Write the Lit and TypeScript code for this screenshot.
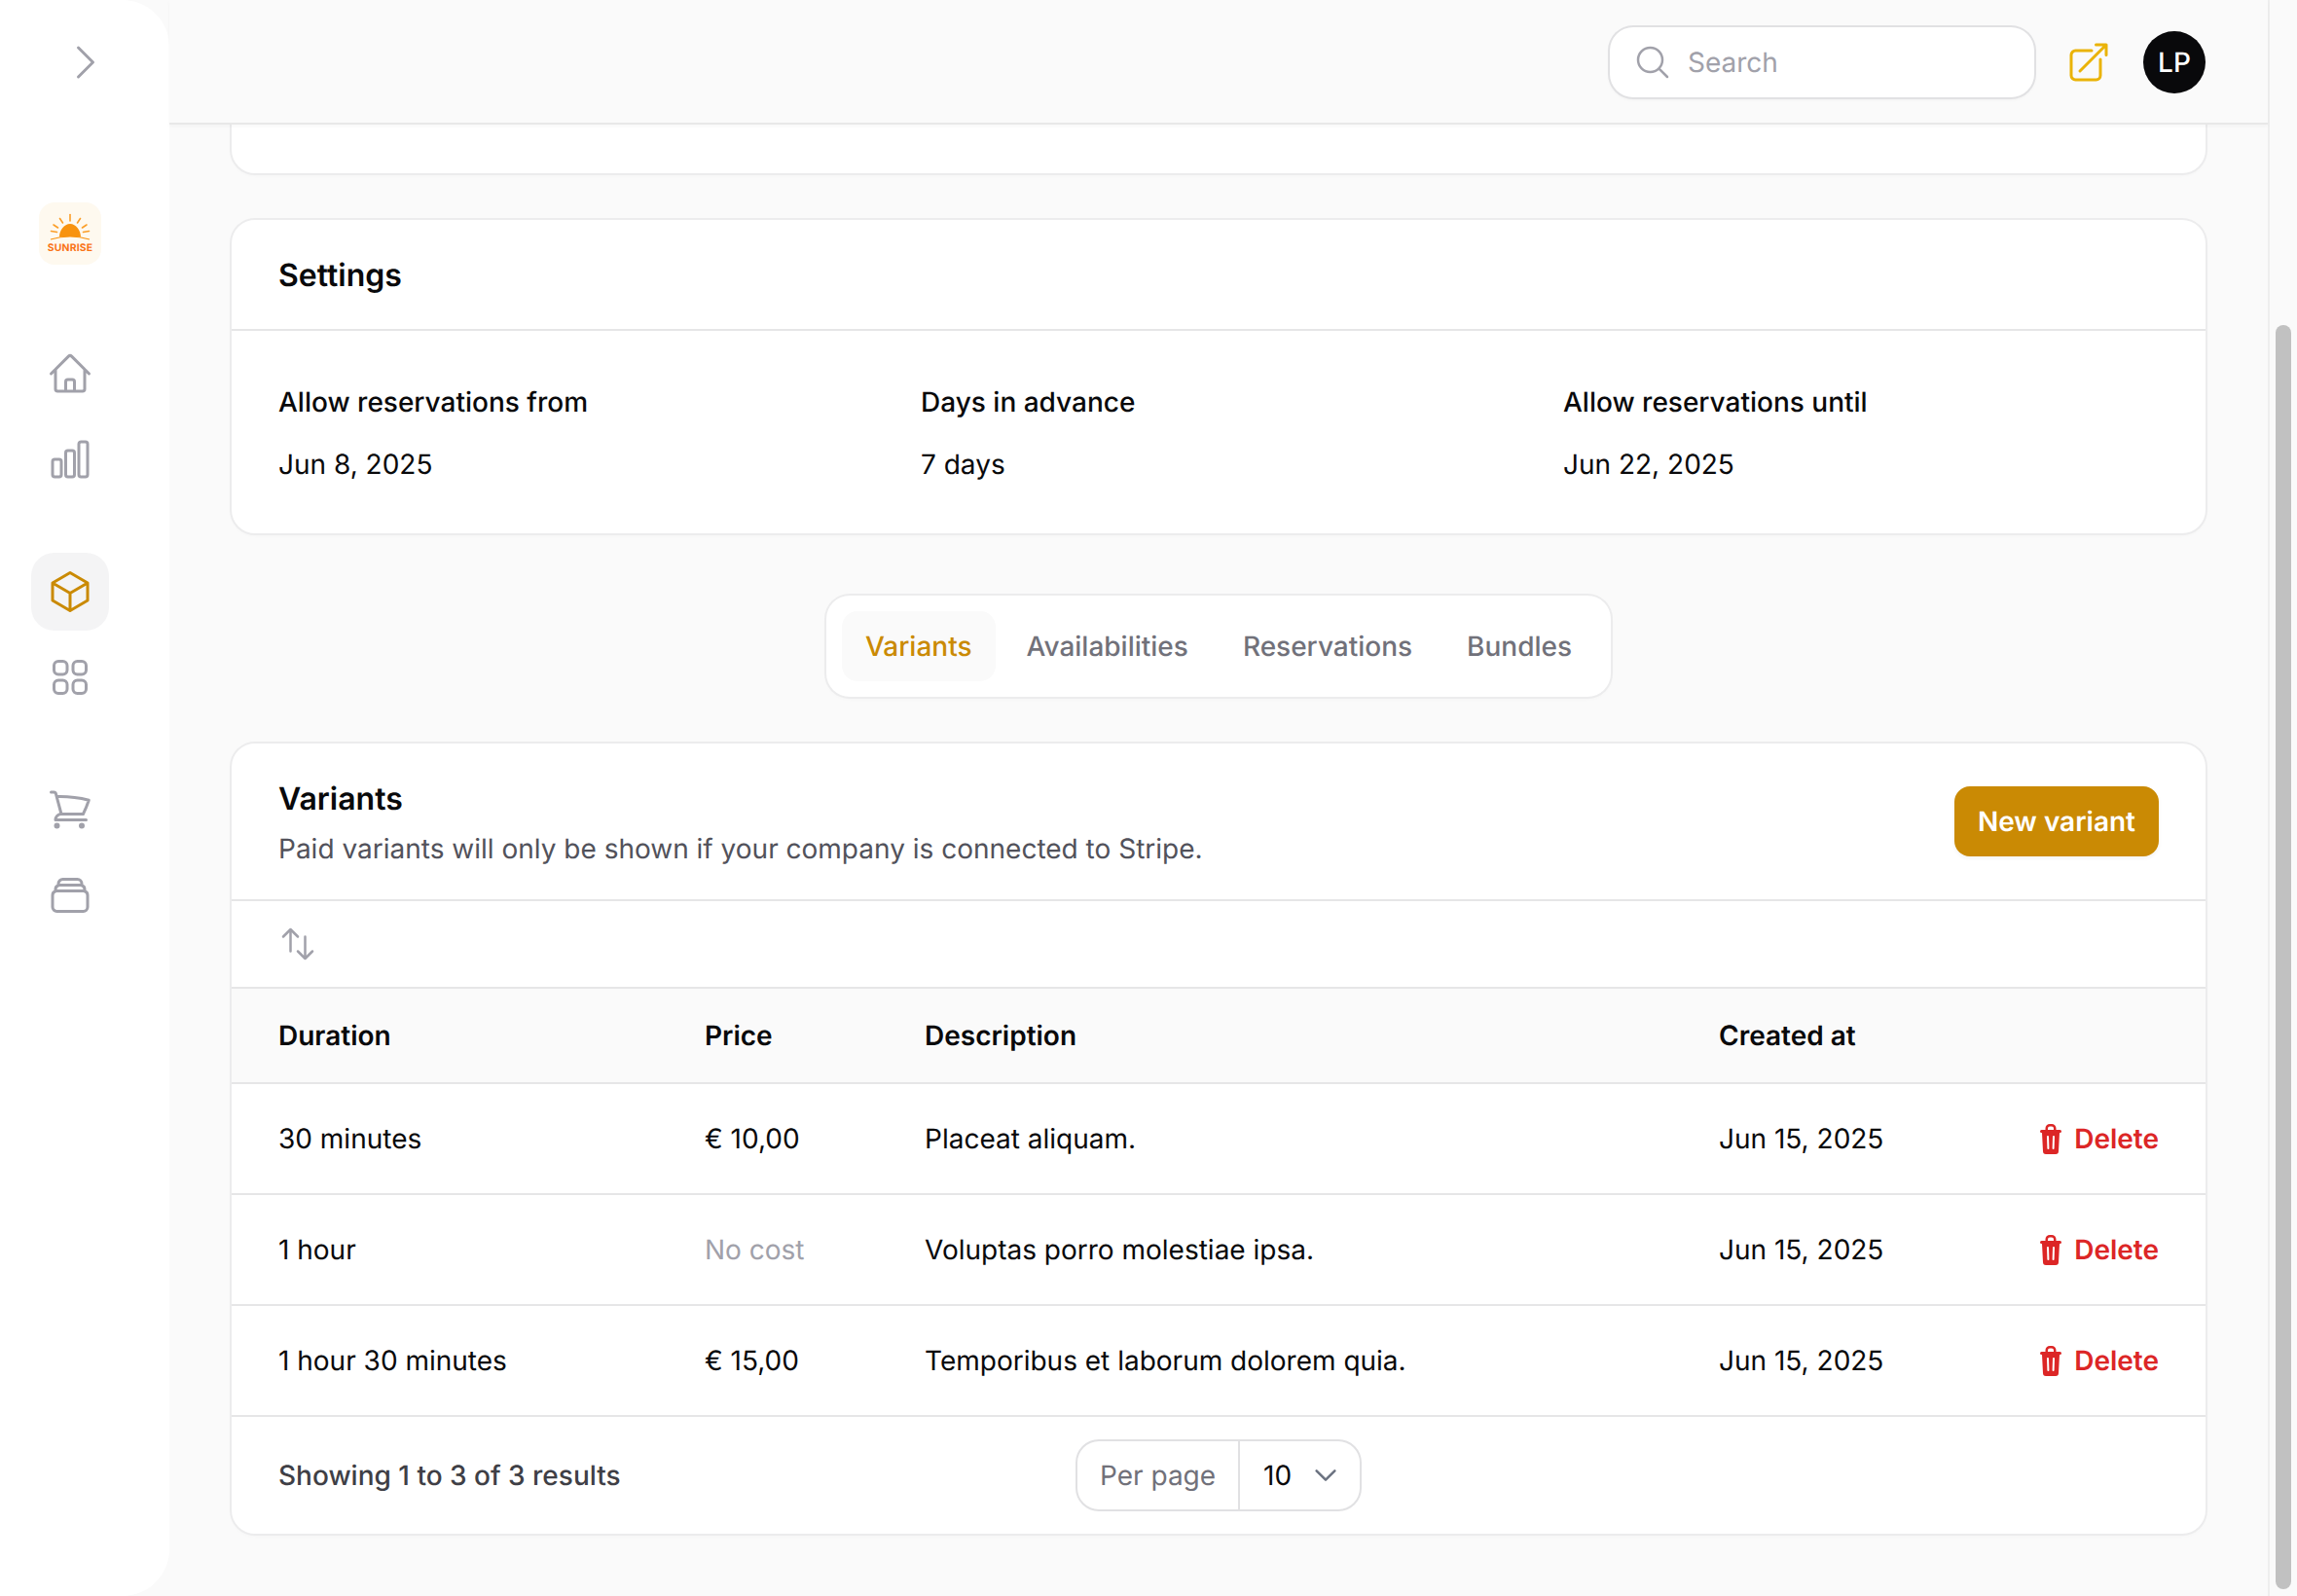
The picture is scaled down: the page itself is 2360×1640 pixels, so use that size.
import { LitElement, html, css, svg } from "lit";
import { customElement } from "lit/decorators.js";

const icon = (d: string, cls = "") => html`<svg class="ic ${cls}" viewBox="0 0 24 24" fill="none" stroke="currentColor" stroke-width="1.5" stroke-linecap="round" stroke-linejoin="round"><path d=${d}></path></svg>`;

const P = {
  chev: "m8.25 4.5 7.5 7.5-7.5 7.5",
  home: "m2.25 12 8.954-8.955c.44-.439 1.152-.439 1.591 0L21.75 12M4.5 9.75v10.125c0 .621.504 1.125 1.125 1.125H9.75v-4.875c0-.621.504-1.125 1.125-1.125h2.25c.621 0 1.125.504 1.125 1.125V21h4.125c.621 0 1.125-.504 1.125-1.125V9.75M8.25 21h8.25",
  chart: "M3 13.125C3 12.504 3.504 12 4.125 12h2.25c.621 0 1.125.504 1.125 1.125v6.75C7.5 20.496 6.996 21 6.375 21h-2.25A1.125 1.125 0 0 1 3 19.875v-6.75ZM9.75 8.625c0-.621.504-1.125 1.125-1.125h2.25c.621 0 1.125.504 1.125 1.125v11.25c0 .621-.504 1.125-1.125 1.125h-2.25a1.125 1.125 0 0 1-1.125-1.125V8.625ZM16.5 4.125c0-.621.504-1.125 1.125-1.125h2.25C20.496 3 21 3.504 21 4.125v15.75c0 .621-.504 1.125-1.125 1.125h-2.25a1.125 1.125 0 0 1-1.125-1.125V4.125Z",
  cube: "m21 7.5-9-5.25L3 7.5m18 0-9 5.25m9-5.25v9l-9 5.25M3 7.5l9 5.25M3 7.5v9l9 5.25m0-9v9",
  grid: "M3.75 6A2.25 2.25 0 0 1 6 3.75h2.25A2.25 2.25 0 0 1 10.5 6v2.25a2.25 2.25 0 0 1-2.25 2.25H6a2.25 2.25 0 0 1-2.25-2.25V6ZM3.75 15.75A2.25 2.25 0 0 1 6 13.5h2.25a2.25 2.25 0 0 1 2.25 2.25V18a2.25 2.25 0 0 1-2.25 2.25H6A2.25 2.25 0 0 1 3.75 18v-2.25ZM13.5 6a2.25 2.25 0 0 1 2.25-2.25H18a2.25 2.25 0 0 1 2.25 2.25v2.25a2.25 2.25 0 0 1-2.25 2.25h-2.25a2.25 2.25 0 0 1-2.25-2.25V6ZM13.5 15.75a2.25 2.25 0 0 1 2.25-2.25H18a2.25 2.25 0 0 1 2.25 2.25V18A2.25 2.25 0 0 1 18 20.25h-2.25A2.25 2.25 0 0 1 13.5 18v-2.25Z",
  cart: "M2.25 3h1.386c.51 0 .955.343 1.087.835l.383 1.437M7.5 14.25a3 3 0 0 0-3 3h15.75m-12.75-3h11.218c1.121-2.3 2.1-4.684 2.924-7.138a60.114 60.114 0 0 0-16.536-1.84M7.5 14.25 5.106 5.272M6 20.25a.75.75 0 1 1-1.5 0 .75.75 0 0 1 1.5 0Zm12.75 0a.75.75 0 1 1-1.5 0 .75.75 0 0 1 1.5 0Z",
  stack: "M6 6.878V6a2.25 2.25 0 0 1 2.25-2.25h7.5A2.25 2.25 0 0 1 18 6v.878m-12 0c.235-.083.487-.128.75-.128h10.5c.263 0 .515.045.75.128m-12 0A2.25 2.25 0 0 0 4.5 9v.878m13.5-3A2.25 2.25 0 0 1 19.5 9v.878m0 0a2.246 2.246 0 0 0-.75-.128H5.25c-.263 0-.515.045-.75.128m15 0A2.25 2.25 0 0 1 21 12v6a2.25 2.25 0 0 1-2.25 2.25H5.25A2.25 2.25 0 0 1 3 18v-6c0-.98.626-1.813 1.5-2.122",
  search: "m21 21-5.197-5.197m0 0A7.5 7.5 0 1 0 5.196 5.196a7.5 7.5 0 0 0 10.607 10.607Z",
  ext: "M13.5 6H5.25A2.25 2.25 0 0 0 3 8.25v10.5A2.25 2.25 0 0 0 5.25 21h10.5A2.25 2.25 0 0 0 18 18.75V10.5m-10.5 6L21 3m0 0h-5.25M21 3v5.25",
  sort: "M3 7.5 7.5 3m0 0L12 7.5M7.5 3v13.5m13.5 0L16.5 21m0 0L12 16.5m4.5 4.5V7.5",
  down: "m19.5 8.25-7.5 7.5-7.5-7.5",
};

const rays = [
  [72, 227, 72, 220.5],
  [64.5, 229, 61.5, 224.5],
  [79.5, 229, 82.5, 224.5],
  [59.5, 234, 55, 231],
  [84.5, 234, 89, 231],
  [58.5, 238.5, 52.5, 237.5],
  [85.5, 238.5, 91.5, 237.5],
];

const logo = html`<svg class="logo" viewBox="40 208 64 64">
  <rect x="40" y="208" width="64" height="64" rx="16" fill="#fef9ef"></rect>
  ${rays.map(([a, b, c, d]) => svg`<line x1=${a} y1=${b} x2=${c} y2=${d} stroke="#fb9e27" stroke-width="1.6" stroke-linecap="round"></line>`)}
  <path d="M61 243.5c0-7 5-13.500 11-13.500s11 6.500 11 13.500q-11-1.200-22 0Z" fill="#f8930f"></path>
  <path d="M52 246q20-6 40 0" fill="none" stroke="#f8930f" stroke-width="1.2"></path>
  <text x="72" y="258.3" text-anchor="middle" class="logotext">SUNRISE</text>
</svg>`;

const trash = html`<svg class="trash" viewBox="0 0 22 31">
  <path fill="#dc2626" fill-rule="evenodd" d="M5.5 6V4.5A4.5 4.5 0 0 1 10 0h2a4.5 4.5 0 0 1 4.5 4.5V6h4a1.500 1.500 0 0 1 0 3H20l-1 19a3 3 0 0 1-3 3H6a3 3 0 0 1-3-3L2 9h-.5a1.500 1.500 0 0 1 0-3h4ZM8 6h6V4.500a2 2 0 0 0-2-2h-2a2 2 0 0 0-2 2V6Z"></path>
  <path d="M8 13l.4 12M14 13l-.4 12" stroke="#fff" stroke-width="2" stroke-linecap="round" fill="none"></path>
</svg>`;

const rows: [string, string, string, string][] = [
  ["30 minutes", "€ 10,00", "Placeat aliquam.", "Jun 15, 2025"],
  ["1 hour", "No cost", "Voluptas porro molestiae ipsa.", "Jun 15, 2025"],
  ["1 hour 30 minutes", "€ 15,00", "Temporibus et laborum dolorem quia.", "Jun 15, 2025"],
];

@customElement("app-root")
export class AppRoot extends LitElement {
  static styles = css`
    :host { display: flex; width: 2360px; height: 1640px; overflow: hidden; background: #fafafa; color: #09090b; font-family: Inter, "Liberation Sans", sans-serif; font-size: 28px; line-height: 40px; text-rendering: geometricPrecision; }
    * { box-sizing: border-box; }
    .ic { display: block; width: 48px; height: 48px; }

    .side { flex: 0 0 174px; height: 1640px; background: #fff; border-radius: 0 48px 48px 0; padding: 40px 0 0 32px; display: flex; flex-direction: column; color: #a1a1aa; }
    .toggle { margin-left: 32px; height: 48px; }
    .logo { display: block; width: 64px; height: 64px; margin: 120px 0 72px 8px; }
    .logotext { font: 700 10.4px Inter, sans-serif; fill: #f97316; letter-spacing: 0.2px; }
    .group { display: flex; flex-direction: column; gap: 8px; margin-bottom: 56px; }
    .item { width: 80px; height: 80px; border-radius: 24px; display: flex; align-items: center; justify-content: center; }
    .item.on { background: #f4f4f5; color: #ca8a04; }

    .main { flex: 0 0 2156px; height: 1640px; display: flex; flex-direction: column; }
    .top { flex: 0 0 128px; background: #fafafa; border-bottom: 2px solid #e8e8e8; box-shadow: 0 2px 4px rgba(0,0,0,.03); display: flex; align-items: center; justify-content: flex-end; padding: 2px 64px 0 0; position: relative; z-index: 2; }
    .search { width: 436px; height: 72px; background: #fff; border-radius: 24px; box-shadow: 0 0 0 2px #e1e1e3, 0 2px 4px rgba(0,0,0,.05); display: flex; align-items: center; gap: 16px; padding: 0 24px; color: #a1a1aa; margin-right: 32px; }
    .search .ic { width: 40px; height: 40px; }
    .extlink { color: #eab308; margin-right: 32px; }
    .avatar { width: 64px; height: 64px; border-radius: 50%; background: #09090b; color: #fff; display: flex; align-items: center; justify-content: center; font-weight: 500; }

    .content { padding: 0 64px; display: flex; flex-direction: column; }
    .card { background: #fff; border-radius: 24px; box-shadow: 0 0 0 2px #ececed, 0 2px 4px rgba(0,0,0,.03); }
    .stub { height: 50px; border-radius: 0 0 24px 24px; margin-bottom: 48px; }
    .title { font-size: 32px; line-height: 48px; font-weight: 600; }
    .set-h { height: 114px; padding: 33px 48px 0; border-bottom: 2px solid #e6e6e7; }
    .set-b { display: grid; grid-template-columns: repeat(3, 1fr); gap: 48px; padding: 53px 48px 0; height: 208px; }
    .lbl { font-weight: 500; }
    .val { margin-top: 24px; }

    .tabs-wrap { display: flex; justify-content: center; margin: 64px 0 48px; }
    .tabs { display: flex; gap: 8px; padding: 16px; background: #fff; border-radius: 24px; box-shadow: 0 0 0 2px #ececed, 0 2px 4px rgba(0,0,0,.03); }
    .tab { padding: 16px 24px; border-radius: 16px; font-weight: 500; color: #71717a; }
    .tab.on { background: #fafafa; color: #ca8a04; }

    .v-head { height: 162px; padding: 33px 48px 0; display: flex; justify-content: space-between; border-bottom: 2px solid #e6e6e7; }
    .sub { color: #52525b; margin-top: 7px; }
    .btn { width: 210px; height: 72px; margin-top: 11px; background: #ca8a04; color: #fff; font-weight: 600; border-radius: 16px; display: flex; align-items: center; justify-content: center; box-shadow: 0 2px 4px rgba(0,0,0,.05); }
    .toolbar { height: 90px; padding: 24px 48px 0; border-bottom: 2px solid #e6e6e7; color: #a1a1aa; }
    .toolbar .ic { width: 40px; height: 40px; }
    .row { display: grid; grid-template-columns: 438px 226px 816px 1fr; padding: 0 48px; align-items: center; border-bottom: 2px solid #e6e6e7; height: 114px; }
    .row.head { height: 98px; background: #fafafa; font-weight: 600; }
    .muted { color: #a1a1aa; }
    .last { display: flex; justify-content: space-between; align-items: center; }
    .del { display: flex; align-items: center; gap: 13px; color: #dc2626; font-weight: 600; }
    .trash { display: block; width: 22px; height: 31px; }
    .foot { height: 120px; padding: 0 48px; display: grid; grid-template-columns: 1fr auto 1fr; align-items: center; color: #3f3f46; font-weight: 500; }
    .per { display: flex; height: 74px; width: 294px; border-radius: 24px; box-shadow: inset 0 0 0 2px #e1e1e3; font-weight: 400; }
    .per > div { display: flex; align-items: center; }
    .per-l { width: 169px; padding-left: 25px; color: #71717a; border-right: 2px solid #e1e1e3; }
    .per-r { flex: 1; padding-left: 24px; color: #09090b; gap: 20px; }
    .per-r .ic { width: 30px; height: 30px; color: #6b7280; stroke-width: 2; }

    .sb { flex: 0 0 30px; height: 1640px; background: #fafafa; border-left: 2px solid #eeeeee; padding: 334px 6px 7px; }
    .thumb { height: 100%; background: #c1c1c1; border-radius: 8px; }
  `;

  render() {
    return html`
      <nav class="side">
        <div class="toggle">${icon(P.chev)}</div>
        ${logo}
        <div class="group">
          <div class="item">${icon(P.home)}</div>
          <div class="item">${icon(P.chart)}</div>
        </div>
        <div class="group">
          <div class="item on">${icon(P.cube)}</div>
          <div class="item">${icon(P.grid)}</div>
        </div>
        <div class="group">
          <div class="item">${icon(P.cart)}</div>
          <div class="item">${icon(P.stack)}</div>
        </div>
      </nav>
      <div class="main">
        <header class="top">
          <div class="search">${icon(P.search)}<span>Search</span></div>
          <div class="extlink">${icon(P.ext)}</div>
          <div class="avatar">LP</div>
        </header>
        <div class="content">
          <div class="card stub"></div>
          <section class="card">
            <div class="set-h title">Settings</div>
            <div class="set-b">
              <div><div class="lbl">Allow reservations from</div><div class="val">Jun 8, 2025</div></div>
              <div><div class="lbl">Days in advance</div><div class="val">7 days</div></div>
              <div><div class="lbl">Allow reservations until</div><div class="val">Jun 22, 2025</div></div>
            </div>
          </section>
          <div class="tabs-wrap">
            <div class="tabs">
              <div class="tab on">Variants</div>
              <div class="tab">Availabilities</div>
              <div class="tab">Reservations</div>
              <div class="tab">Bundles</div>
            </div>
          </div>
          <section class="card">
            <div class="v-head">
              <div>
                <div class="title">Variants</div>
                <div class="sub">Paid variants will only be shown if your company is connected to Stripe.</div>
              </div>
              <div class="btn">New variant</div>
            </div>
            <div class="toolbar">${icon(P.sort)}</div>
            <div class="row head"><div>Duration</div><div>Price</div><div>Description</div><div>Created at</div></div>
            ${rows.map((r) => html`<div class="row">
              <div>${r[0]}</div>
              <div class=${r[1] === "No cost" ? "muted" : ""}>${r[1]}</div>
              <div>${r[2]}</div>
              <div class="last"><span>${r[3]}</span><span class="del">${trash}Delete</span></div>
            </div>`)}
            <div class="foot">
              <div>Showing 1 to 3 of 3 results</div>
              <div class="per"><div class="per-l">Per page</div><div class="per-r">10 ${icon(P.down)}</div></div>
              <div></div>
            </div>
          </section>
        </div>
      </div>
      <div class="sb"><div class="thumb"></div></div>
    `;
  }
}
